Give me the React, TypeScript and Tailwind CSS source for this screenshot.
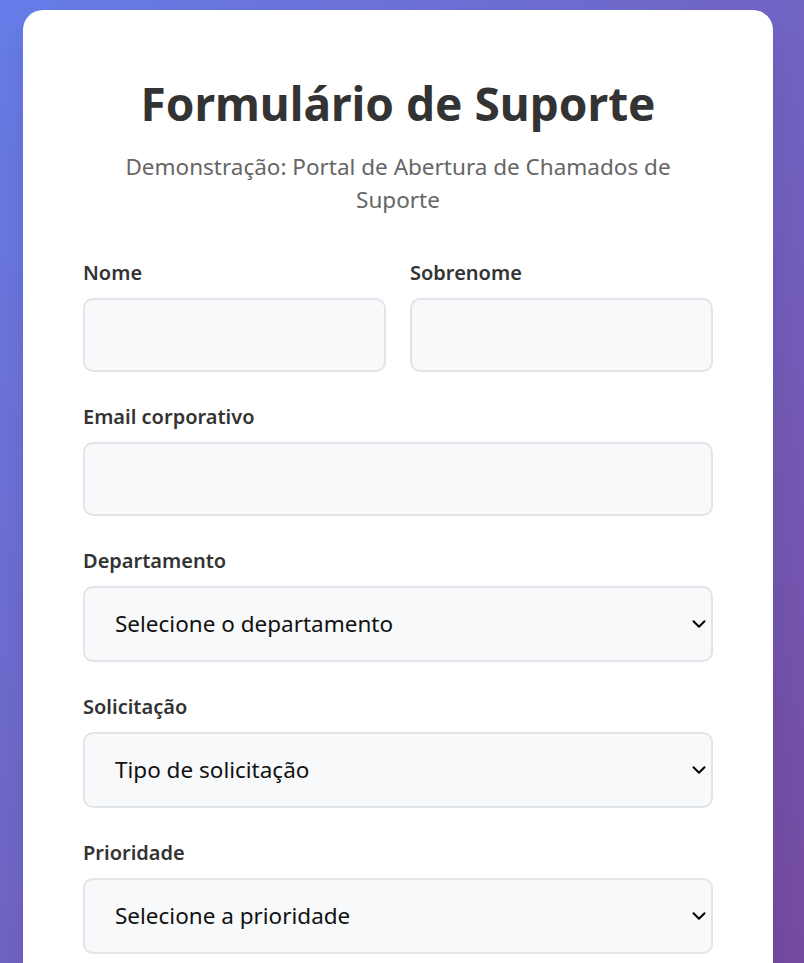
import { ChevronDown } from "lucide-react";

const font = { fontFamily: '"Noto Sans", "Open Sans", sans-serif' };

const Label = (props: { text: string }) => (
    <label className="block mb-[12px] text-[20px] leading-[26px] font-semibold text-[#333]">{props.text}</label>
);

const TextInput = () => (
    <input
        type="text"
        className="block w-full h-[74px] px-[28px] rounded-[10px] border-2 border-[#e1e5e9] bg-[#f8f9fa] text-[20px] focus:outline-none"
    />
);

const Select = (props: { placeholder: string }) => (
    <div className="relative">
        <div className="flex items-center w-full h-[76px] pl-[30px] pr-[12px] rounded-[10px] border-2 border-[#e1e5e9] bg-[#f8f9fa] text-[22.5px] text-[#111]">
            {props.placeholder}
        </div>
        <ChevronDown className="absolute right-[3px] top-1/2 -translate-y-1/2 text-black" size={22} strokeWidth={2.2} />
    </div>
);

export default function App() {
    return (
        <div style={font} className="h-[963px] overflow-hidden bg-gradient-to-br from-[#667eea] to-[#764ba2] pl-[23px] pt-[10px]">
            <div className="w-[750px] bg-white rounded-[20px] px-[60px] pt-[62px] pb-[60px] shadow-[0_20px_40px_rgba(0,0,0,0.1)]">
                <h1 className="text-center text-[46px] leading-[62px] font-bold text-[#333]">Formulário de Suporte</h1>
                <p className="mx-auto mt-[16px] max-w-[590px] text-center text-[22.5px] leading-[33px] text-[#666]">
                    Demonstração: Portal de Abertura de Chamados de Suporte
                </p>
                <div className="mt-[44px] flex flex-col gap-[32px]">
                    <div className="grid grid-cols-2 gap-[24px]">
                        <div>
                            <Label text="Nome" />
                            <TextInput />
                        </div>
                        <div>
                            <Label text="Sobrenome" />
                            <TextInput />
                        </div>
                    </div>
                    <div>
                        <Label text="Email corporativo" />
                        <TextInput />
                    </div>
                    <div>
                        <Label text="Departamento" />
                        <Select placeholder="Selecione o departamento" />
                    </div>
                    <div>
                        <Label text="Solicitação" />
                        <Select placeholder="Tipo de solicitação" />
                    </div>
                    <div>
                        <Label text="Prioridade" />
                        <Select placeholder="Selecione a prioridade" />
                    </div>
                </div>
            </div>
        </div>
    );
}
